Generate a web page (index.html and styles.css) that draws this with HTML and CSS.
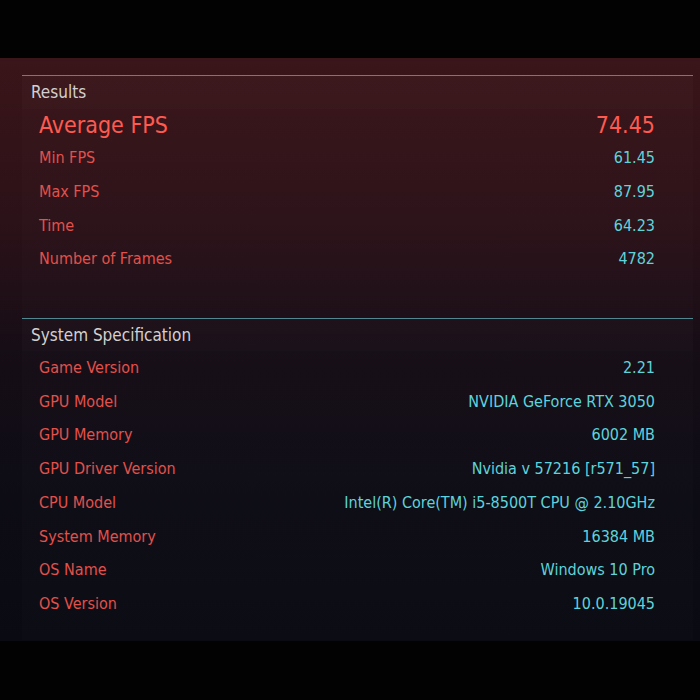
FILE: index.html
```html
<!DOCTYPE html>
<html lang="en">
<head>
    <meta charset="UTF-8">
    <meta name="viewport" content="width=device-width, initial-scale=1.0">
    <title>Benchmark Results</title>
    <link rel="stylesheet" href="styles.css">
</head>
<body>
    <div class="screen">
        <div class="section results">
            <div class="section-title">Results</div>
            <div class="row main">
                <span class="label">Average FPS</span>
                <span class="value">74.45</span>
            </div>
            <div class="row">
                <span class="label">Min FPS</span>
                <span class="value">61.45</span>
            </div>
            <div class="row">
                <span class="label">Max FPS</span>
                <span class="value">87.95</span>
            </div>
            <div class="row">
                <span class="label">Time</span>
                <span class="value">64.23</span>
            </div>
            <div class="row">
                <span class="label">Number of Frames</span>
                <span class="value">4782</span>
            </div>
        </div>

        <div class="section specs">
            <div class="section-title">System Specification</div>
            <div class="row">
                <span class="label">Game Version</span>
                <span class="value">2.21</span>
            </div>
            <div class="row">
                <span class="label">GPU Model</span>
                <span class="value">NVIDIA GeForce RTX 3050</span>
            </div>
            <div class="row">
                <span class="label">GPU Memory</span>
                <span class="value">6002 MB</span>
            </div>
            <div class="row">
                <span class="label">GPU Driver Version</span>
                <span class="value">Nvidia v 57216 [r571_57]</span>
            </div>
            <div class="row">
                <span class="label">CPU Model</span>
                <span class="value">Intel(R) Core(TM) i5-8500T CPU @ 2.10GHz</span>
            </div>
            <div class="row">
                <span class="label">System Memory</span>
                <span class="value">16384 MB</span>
            </div>
            <div class="row">
                <span class="label">OS Name</span>
                <span class="value">Windows 10 Pro</span>
            </div>
            <div class="row">
                <span class="label">OS Version</span>
                <span class="value">10.0.19045</span>
            </div>
        </div>
    </div>
</body>
</html>
```

FILE: styles.css
```css
body {
    margin: 0;
    padding: 0;
    background-color: #020202;
    font-family: "DejaVu Sans Condensed", "DejaVu Sans", sans-serif;
    font-stretch: condensed;
}
.screen {
    margin-top: 58px;
    height: 566px;
    padding-top: 17px;
    background: linear-gradient(180deg, #3a1519 0%, #2a1118 30%, #160d16 50%, #0d0c15 75%, #0a0b12 100%);
}
.section {
    margin-left: 22px;
    width: 671px;
    border-top: 1.5px solid #4f8890;
    background: rgba(255, 255, 255, 0.01);
}
.results {
    padding-bottom: 42px;
}
.specs {
    padding-bottom: 20px;
}
.section-title {
    height: 33px;
    line-height: 32px;
    padding-left: 9px;
    font-size: 17px;
    color: #d2d0d0;
    background: rgba(255, 255, 255, 0.01);
}
.specs .section-title {
    height: 32px;
}
.row {
    display: flex;
    justify-content: space-between;
    align-items: center;
    height: 33.7px;
    padding: 0 38px 0 17px;
    font-size: 16px;
}
.row .label {
    color: #e2514b;
}
.row .value {
    color: #5ed3dc;
}
.row.main {
    height: 32px;
    font-size: 23px;
}
.row.main .label,
.row.main .value {
    color: #ff5a4f;
}
```
